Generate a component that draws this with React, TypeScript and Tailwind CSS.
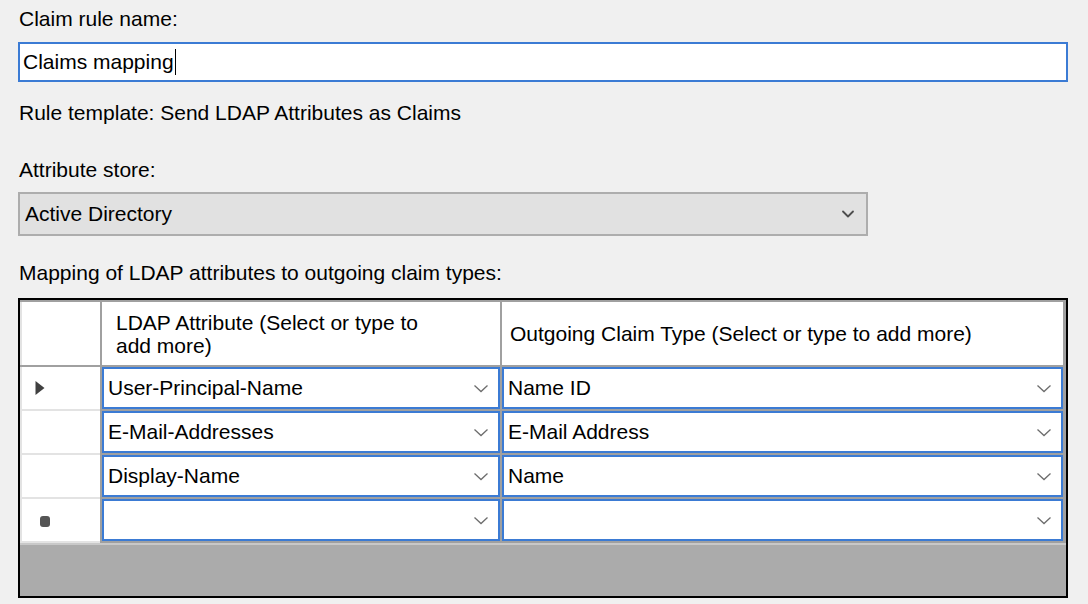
import { ChevronDown } from "lucide-react";

const rows = [
  { attr: "User-Principal-Name", claim: "Name ID", current: true },
  { attr: "E-Mail-Addresses", claim: "E-Mail Address" },
  { attr: "Display-Name", claim: "Name" },
  { attr: "", claim: "", isNew: true },
];

function CellChevron() {
  return (
    <svg width="16" height="9" viewBox="0 0 16 9" className="shrink-0">
      <path d="M1.5 1.5 L8 7.5 L14.5 1.5" fill="none" stroke="#6d6d6d" strokeWidth="1.3" />
    </svg>
  );
}

// combobox cell in edit mode - blue frame, value left, chevron right
function ComboCell({ value, width }: { value: string; width: string }) {
  return (
    <div className={`${width} h-[42px] shrink-0 border-2 border-[#3b7bd4] bg-white flex items-center pl-[4px] pr-[9px]`}>
      <span className="flex-1 truncate">{value}</span>
      <CellChevron />
    </div>
  );
}

export default function App() {
  return (
    <div
      className="w-[1088px] h-[604px] bg-[#f0f0f0] pl-[18px] pr-[20px] pt-[7px] text-[21px] leading-[24px] text-black overflow-hidden"
      style={{ fontFamily: '"Liberation Sans", Arial, sans-serif' }}
    >
      <div className="pl-[1px]">Claim rule name:</div>

      <div className="mt-[11px] h-[40px] border-2 border-[#3b7bd4] bg-white flex items-center pl-[3px]">
        <span>Claims mapping</span>
        <span className="ml-[1px] w-[1.5px] h-[26px] bg-black" />
      </div>

      <div className="mt-[19px] pl-[1px]">Rule template: Send LDAP Attributes as Claims</div>

      <div className="mt-[33px] pl-[1px]">Attribute store:</div>

      <div className="mt-[10px] w-[850px] h-[44px] border-2 border-[#adadad] bg-[#e1e1e1] flex items-center pl-[5px] pr-[8px]">
        <span className="flex-1">Active Directory</span>
        <ChevronDown size={20} strokeWidth={2.2} className="text-[#4d4d4d]" />
      </div>

      <div className="mt-[25px] pl-[1px]">Mapping of LDAP attributes to outgoing claim types:</div>

      <div className="mt-[13px] h-[300px] border-2 border-black bg-[#ababab] flex flex-col">
        <div className="h-[2px] bg-[#a0a0a0]" />
        {/* column headers */}
        <div className="h-[65px] flex bg-[#a0a0a0]">
          <div className="w-[80px] h-[63px] border-l-2 border-[#e3e3e3] bg-white" />
          <div className="w-[2px]" />
          <div className="w-[398px] h-[63px] bg-white flex items-center pl-[14px] leading-[23px]">
            <span>
              LDAP Attribute (Select or type to
              <br />
              add more)
            </span>
          </div>
          <div className="w-[2px]" />
          <div className="w-[561px] h-[63px] bg-white flex items-center pl-[8px]">
            Outgoing Claim Type (Select or type to add more)
          </div>
        </div>
        {rows.map((r, i) => (
          <div key={i} className="h-[44px] flex items-start bg-[#a0a0a0]">
            <div className="w-[80px] h-[44px] border-l-2 border-b-2 border-[#e3e3e3] bg-white flex items-center">
              {r.current && (
                <svg width="10" height="14" viewBox="0 0 10 14" className="ml-[13px]">
                  <path d="M0.5 0 L9.5 7 L0.5 14 Z" fill="#404040" />
                </svg>
              )}
              {r.isNew && <span className="ml-[18px] mt-[2px] w-[10px] h-[11px] rounded-[3px] bg-[#555555]" />}
            </div>
            <div className="w-[2px]" />
            <ComboCell value={r.attr} width="w-[398px]" />
            <div className="w-[2px]" />
            <ComboCell value={r.claim} width="w-[561px]" />
          </div>
        ))}
        <div className="h-[2px] bg-[#c8c8c8]" />
      </div>
    </div>
  );
}
